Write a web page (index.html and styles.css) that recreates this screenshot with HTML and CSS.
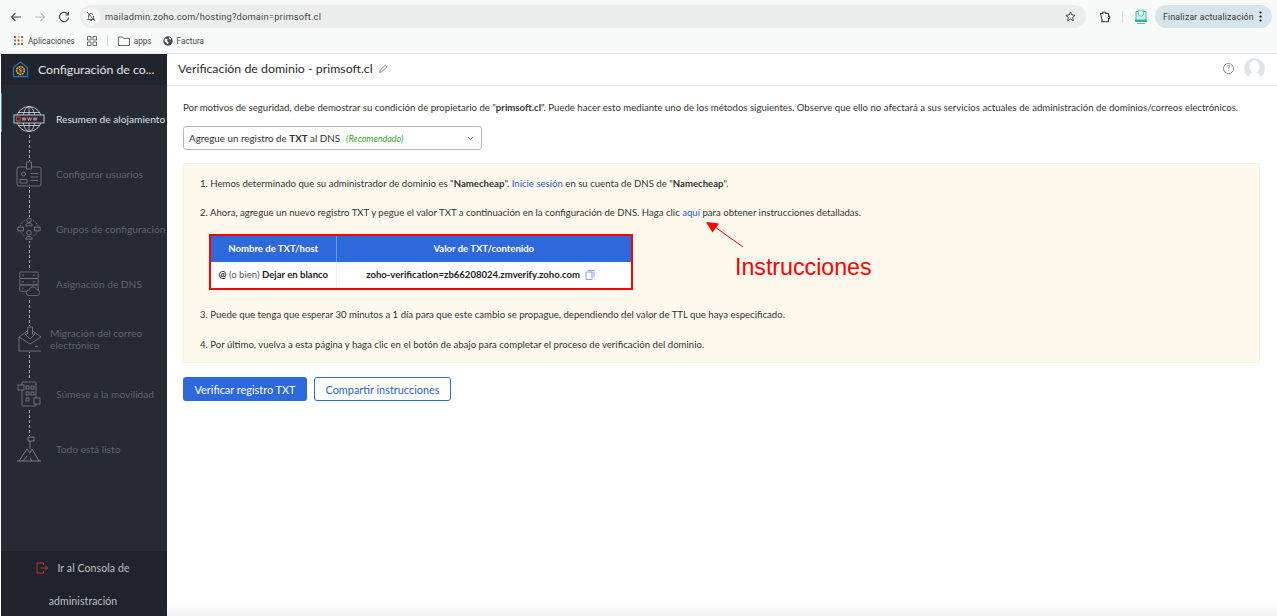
FILE: index.html
```html
<!DOCTYPE html>
<html lang="es">
<head>
	<meta charset="UTF-8">
	<title>Verificación de dominio</title>
	<link rel="stylesheet" href="styles.css">
</head>
<body>
	<div class="toolbar">
		<div class="nav-btns">
			<svg width="12" height="12" viewBox="0 0 12 12"><path d="M11 6H1.500M5.500 2 1.500 6l4 4" fill="none" stroke="#4a4d51" stroke-width="1.100"/></svg>
			<svg width="12" height="12" viewBox="0 0 12 12"><path d="M1 6h9.500M6.500 2l4 4-4 4" fill="none" stroke="#b4b7ba" stroke-width="1.100"/></svg>
			<svg width="12" height="12" viewBox="0 0 12 12"><path d="M10 3.600A4.600 4.600 0 1 0 10.600 6.500M10.400 1v3H7.400" fill="none" stroke="#4a4d51" stroke-width="1.200"/></svg>
		</div>
		<div class="address">
			<span class="site-icon">
				<svg width="10" height="11" viewBox="0 0 10 11"><path d="M2.500 7.500V5a2.500 2.500 0 0 1 4.600-1.300M7.500 5v2.500L8.500 8.500H1.500M4 9.500h2M1 1l8 9" fill="none" stroke="#45484c" stroke-width=".9"/></svg>
			</span>
			<span class="url">mailadmin.zoho.com/hosting?domain=primsoft.cl</span>
			<svg class="star" width="11" height="11" viewBox="0 0 12 12"><path d="M6 1l1.500 3.300 3.500.4-2.600 2.400.7 3.500L6 8.800 2.900 10.600l.7-3.500L1 4.700l3.500-.4z" fill="none" stroke="#3c3f43" stroke-width="1"/></svg>
		</div>
		<svg class="ext" width="12" height="12" viewBox="0 0 12 12"><path d="M1.500 2.500h2.300V1.200h3v1.300h2.700v2.700h1.200v2.400H9.500v3.200h-7l.7-1.800-.7-1.900z" fill="none" stroke="#3c3f43" stroke-width="1.100"/></svg>
		<span class="tool-sep"></span>
		<svg class="profile" width="12" height="16" viewBox="0 0 12 16">
			<path d="M1 2.500h10v9.500H1z" fill="#c9efe9" stroke="#45bfb0" stroke-width="1"/>
			<path d="M3.500 1h5v5L6 7.500 3.500 6z" fill="#eafaf7" stroke="#45bfb0" stroke-width=".8"/>
			<path d="M0 10.500h12V13H0z" fill="#2fb3a3"/>
			<path d="M2 14.500h8" stroke="#9aa3a6" stroke-width="1"/>
		</svg>
		<div class="update">
			<span>Finalizar actualización</span>
			<svg width="3" height="11" viewBox="0 0 3 11"><circle cx="1.500" cy="1.500" r="1.100"/><circle cx="1.500" cy="5.500" r="1.100"/><circle cx="1.500" cy="9.500" r="1.100"/></svg>
		</div>
	</div>
	<div class="bookmarks">
		<span class="bm">
			<svg width="9" height="9" viewBox="0 0 9 9">
				<rect width="2" height="2" fill="#d9453a"/><rect x="3.500" width="2" height="2" fill="#f0b429"/><rect x="7" width="2" height="2" fill="#3b82e0"/>
				<rect y="3.500" width="2" height="2" fill="#3ba55d"/><rect x="3.500" y="3.500" width="2" height="2" fill="#d9453a"/><rect x="7" y="3.500" width="2" height="2" fill="#f0b429"/>
				<rect y="7" width="2" height="2" fill="#3b82e0"/><rect x="3.500" y="7" width="2" height="2" fill="#3ba55d"/><rect x="7" y="7" width="2" height="2" fill="#d9453a"/>
			</svg>
			Aplicaciones
		</span>
		<svg class="grid-ico" width="10" height="10" viewBox="0 0 10 10"><path d="M.5.500h3.500v3.500H.5zM6 .5h3.500v3.500H6zM.5 6h3.500v3.500H.5zM6 6h3.500v3.500H6z" fill="none" stroke="#55585c" stroke-width=".9"/></svg>
		<span class="bm-sep"></span>
		<span class="bm bm-apps">
			<svg width="12" height="10" viewBox="0 0 12 10"><path d="M.5 1h4l1 1.300h6V9.500H.5z" fill="none" stroke="#55585c" stroke-width=".9"/></svg>
			apps
		</span>
		<span class="bm">
			<svg width="10" height="10" viewBox="0 0 10 10"><circle cx="5" cy="5" r="4.700" fill="#4b4e52"/><path d="M2 2.500l2.500.5L4 5l1.500 1L5 8.500 3 6.500 1.500 5zM6 1l2 1.500-.5 1.500L6 3z" fill="#f8f9f9"/></svg>
			Factura
		</span>
	</div>

	<div class="app">
		<aside class="sidebar">
			<div class="side-head">
				<svg width="17" height="17" viewBox="0 0 17 17"><path d="M8.500 1 1.500 6.500V15.500h14V6.500z" fill="none" stroke="#2f6fb5" stroke-width="1.300"/><circle cx="8.500" cy="9.500" r="3.800" fill="#20242c" stroke="#e8a92e" stroke-width="1.700" stroke-dasharray="2 .6"/><path d="M10 8H7.500v1.500h2V11H7" fill="none" stroke="#e8a92e" stroke-width=".9"/></svg>
				<span>Configuración de co...</span>
			</div>
			<nav class="steps">
				<div class="step-line"></div>
				<div class="step step-active">
					<span class="step-icon">
						<svg width="32" height="28" viewBox="0 0 32 28" fill="none" stroke="#d8dade" stroke-width=".8">
							<circle cx="16" cy="14" r="12.500"/><ellipse cx="16" cy="14" rx="6" ry="12.500"/><path d="M16 1.500v25M5 7.500h22M5 20.500h22"/>
							<rect x="1" y="10" width="30" height="8" fill="#252a33" stroke="#e6e7ea"/>
							<rect x="3.500" y="12" width="3.500" height="4" stroke="#d9534f"/>
							<path d="M9 12.500l1 3 1-3 1 3 1-3M14.500 12.500l1 3 1-3 1 3 1-3M20 12.500l1 3 1-3 1 3 1-3" stroke="#e9a6a0"/>
						</svg>
					</span>
					<span class="step-text">Resumen de alojamiento</span>
				</div>
				<div class="step">
					<span class="step-icon">
						<svg width="26" height="26" viewBox="0 0 26 26" fill="none" stroke="#7c8087" stroke-width=".8">
							<rect x="1" y="6" width="24" height="19" rx="2"/><rect x="10.500" y="1" width="5" height="7" fill="#252a33"/>
							<circle cx="7.500" cy="13" r="2"/><path d="M4 22v-3.500h7V22zM14.500 12.500H22M14.500 16H22M14.500 19.500H22"/>
						</svg>
					</span>
					<span class="step-text">Configurar usuarios</span>
				</div>
				<div class="step">
					<span class="step-icon">
						<svg width="24" height="24" viewBox="0 0 26 26" fill="none" stroke="#7c8087" stroke-width=".9">
							<circle cx="13" cy="3.500" r="2.500"/><path d="M9.500 9.500c0-4 7-4 7 0z"/><circle cx="13" cy="17" r="2.500"/><path d="M9.500 24c0-4 7-4 7 0z"/>
							<rect x="1" y="11" width="6" height="4"/><rect x="19" y="11" width="6" height="4"/>
							<path d="M3.500 10c.5-3 2.500-5 5-6.500M22.500 10c-.5-3-2.500-5-5-6.500M4 15.500c.5 2 2 3.500 4 5M22 15.500c-.5 2-2 3.500-4 5" stroke-dasharray="1.500 1"/>
						</svg>
					</span>
					<span class="step-text">Grupos de configuración</span>
				</div>
				<div class="step">
					<span class="step-icon">
						<svg width="24" height="28" viewBox="0 0 26 28" fill="none" stroke="#7c8087" stroke-width=".8">
							<rect x="3" y="1" width="20" height="7" rx="1"/><rect x="3" y="8" width="20" height="7" rx="1"/><rect x="3" y="15" width="20" height="7" rx="1"/>
							<path d="M5.500 4.500h2M5.500 11.500h2M5.500 18.500h2M17 4.500h3M17 11.500h3"/>
							<path d="M13 26.500a3 3 0 0 1 0-6 4.500 4.500 0 0 1 8.500-.5 3.300 3.300 0 0 1 .5 6.500z" fill="#252a33"/>
						</svg>
					</span>
					<span class="step-text">Asignación de DNS</span>
				</div>
				<div class="step step-tight">
					<span class="step-icon">
						<svg width="24" height="26" viewBox="0 0 24 26" fill="none" stroke="#7c8087" stroke-width=".8">
							<path d="M1 11 12 3l11 8M1 11v14h22M1 11l11 7 11-7"/><path d="M9.500 1v7H7l5 5 5-5h-2.500V1z" fill="#252a33"/><path d="M17 20.500h3"/>
						</svg>
					</span>
					<span class="step-text">Migración del correo electrónico</span>
				</div>
				<div class="step">
					<span class="step-icon">
						<svg width="24" height="28" viewBox="0 0 24 28" fill="none" stroke="#7c8087" stroke-width=".8">
							<rect x="5" y="2" width="14" height="24" rx="1"/><rect x="1" y="5" width="6" height="5" fill="#252a33"/><rect x="17" y="18" width="6" height="6" fill="#252a33"/>
							<rect x="9" y="6" width="3" height="3"/><rect x="14" y="6" width="3" height="3"/><rect x="9" y="12" width="3" height="3"/><rect x="14" y="12" width="3" height="3"/><rect x="9" y="18" width="3" height="3"/>
						</svg>
					</span>
					<span class="step-text">Súmese a la movilidad</span>
				</div>
				<div class="step">
					<span class="step-icon">
						<svg width="26" height="26" viewBox="0 0 26 26" fill="none" stroke="#8a8e95" stroke-width=".8">
							<path d="M1 25h24M3 25l8-12 3 4 2-4 7 12M7 25l4-5M16 25l-2-3"/><path d="M14 13V2"/><path d="M12 1h6v4h-6z" fill="#252a33"/>
						</svg>
					</span>
					<span class="step-text">Todo está listo</span>
				</div>
			</nav>
			<div class="side-foot">
				<div class="foot-line">
					<svg width="12" height="12" viewBox="0 0 12 12" fill="none" stroke="#cf2a2a" stroke-width="1"><path d="M7.500 3V1H1v10h6.500V9M4.500 6H11.500M9.500 4l2 2-2 2"/></svg>
					<span>Ir al Consola de</span>
				</div>
				<div class="foot-line">administración</div>
			</div>
		</aside>

		<main class="main">
			<header class="main-head">
				<h1>Verificación de dominio - primsoft.cl</h1>
				<svg class="pencil" width="9" height="9" viewBox="0 0 9 9"><path d="M.7 8.300l.4-2L6.300 1l1.700 1.700-5.300 5.200z" fill="none" stroke="#666" stroke-width=".8"/></svg>
				<span class="help">?</span>
				<svg class="avatar" width="21" height="21" viewBox="0 0 21 21"><circle cx="10.500" cy="10.500" r="10.500" fill="#dfe3ec"/><ellipse cx="10.500" cy="9" rx="5" ry="6.500" fill="#fff"/><path d="M4 21c.5-5 3-6.500 6.500-6.500S16.500 16 17 21z" fill="#fff"/></svg>
			</header>
			<div class="content">
				<p class="intro">Por motivos de seguridad, debe demostrar su condición de propietario de "<b>primsoft.cl</b>". Puede hacer esto mediante uno de los métodos siguientes. Observe que ello no afectará a sus servicios actuales de administración de dominios/correos electrónicos.</p>
				<div class="method">
					<span>Agregue un registro de <b>TXT</b> al DNS</span>
					<em>(Recomendado)</em>
					<svg width="7" height="5" viewBox="0 0 7 5"><path d="M1 1l2.500 2.500L6 1" fill="none" stroke="#555" stroke-width=".9"/></svg>
				</div>
				<div class="steps-box">
					<p>1. Hemos determinado que su administrador de dominio es "<b>Namecheap</b>". <a>Inicie sesión</a> en su cuenta de DNS de "<b>Namecheap</b>".</p>
					<p>2. Ahora, agregue un nuevo registro TXT y pegue el valor TXT a continuación en la configuración de DNS. Haga clic <a>aquí</a> para obtener instrucciones detalladas.</p>
					<div class="txt-frame">
						<table class="txt-table">
							<tr>
								<th class="col-host">Nombre de TXT/host</th>
								<th>Valor de TXT/contenido</th>
							</tr>
							<tr>
								<td class="cell-host"><b>@</b> <span class="or">(o bien)</span> <b>Dejar en blanco</b></td>
								<td class="cell-value">
									<b>zoho-verification=zb66208024.zmverify.zoho.com</b>
									<svg width="10" height="11" viewBox="0 0 10 11"><path d="M3 1.500h6V8M1 3h6v7.500H1z" fill="none" stroke="#6f9ae6" stroke-width=".9"/></svg>
								</td>
							</tr>
						</table>
					</div>
					<p>3. Puede que tenga que esperar 30 minutos a 1 día para que este cambio se propague, dependiendo del valor de TTL que haya especificado.</p>
					<p>4. Por último, vuelva a esta página y haga clic en el botón de abajo para completar el proceso de verificación del dominio.</p>
					<svg class="note-arrow" width="44" height="32" viewBox="0 0 44 32"><path d="M38 26 10 6" stroke="#f00" stroke-width="1"/><path d="M1 1l13 1.500-6.500 9z" fill="#f00"/></svg>
					<span class="note-text">Instrucciones</span>
				</div>
				<div class="actions">
					<button class="btn btn-primary">Verificar registro TXT</button>
					<button class="btn btn-outline">Compartir instrucciones</button>
				</div>
			</div>
		</main>
	</div>
</body>
</html>
```

FILE: styles.css
```css
*{
	margin: 0;
	padding: 0;
	box-sizing: border-box;
}
html, body{
	height: 616px;
	overflow: hidden;
}
body{
	font-family: Lato, "Open Sans", sans-serif;
	background: #fff;
	color: #222;
}

/* browser chrome */
.toolbar{
	height: 30px;
	padding: 3px 5px 0 10px;
	background: #f8f9f9;
	display: flex;
	align-items: center;
	font-family: Roboto, sans-serif;
}
.nav-btns{
	display: flex;
	gap: 12px;
	width: 70px;
}
.address{
	width: 1007px;
	height: 23px;
	background: #ebeded;
	border-radius: 12px;
	display: flex;
	align-items: center;
	padding: 0 10px 0 3px;
}
.site-icon{
	width: 17px;
	height: 17px;
	border-radius: 50%;
	background: #fafafa;
	display: flex;
	align-items: center;
	justify-content: center;
}
.url{
	margin-left: 5px;
	font-size: 9.300px;
	letter-spacing: .2px;
	color: #43464a;
}
.star{
	margin-left: auto;
}
.ext{
	margin-left: 13px;
}
.tool-sep{
	width: 1px;
	height: 12px;
	background: #d5dcdf;
	margin: 0 12px 0 11px;
}
.profile{
	margin-right: 8px;
}
.update{
	width: 117px;
	height: 23px;
	border-radius: 12px;
	background: #d5e5e9;
	display: flex;
	align-items: center;
	justify-content: space-between;
	padding: 0 10px 0 8px;
	font-size: 8.700px;
	letter-spacing: .2px;
	color: #33383c;
}
.bookmarks{
	height: 24px;
	padding: 0 0 2px 14px;
	background: #f8f9f9;
	border-bottom: 1px solid #e3e4e5;
	display: flex;
	align-items: center;
	font-family: Roboto, sans-serif;
	font-size: 8.200px;
	color: #44474b;
}
.bm{
	display: flex;
	align-items: center;
	gap: 4px;
}
.bm:first-child{
	gap: 5px;
}
.grid-ico{
	margin-left: 12px;
}
.bm-sep{
	width: 1px;
	height: 11px;
	background: #d3dde3;
	margin: 0 10px 0 10px;
}
.bm-apps{
	margin-right: 11px;
}

/* app */
.app{
	display: flex;
	height: 562px;
}
.sidebar{
	width: 166px;
	margin-left: 1px;
	background: #252a33;
	display: flex;
	flex-direction: column;
	flex-shrink: 0;
	border-bottom-left-radius: 3px;
}
.side-head{
	height: 31px;
	background: #20242c;
	display: flex;
	align-items: center;
	padding-left: 11px;
	gap: 9px;
	font-size: 12.300px;
	color: #e4e5e7;
}
.steps{
	position: relative;
	flex: 1;
	padding-top: 6px;
}
.step-line{
	position: absolute;
	left: 28px;
	top: 30px;
	height: 328px;
	border-left: 1px dashed #a5a8ad;
}
.step{
	height: 55px;
	display: flex;
	align-items: center;
	font-size: 10.200px;
	color: #5f636b;
	position: relative;
}
.step-icon{
	width: 55px;
	flex-shrink: 0;
	display: flex;
	justify-content: center;
}
.step-icon svg{
	background: #252a33;
}
.step-text{
	white-space: nowrap;
}
.step-active{
	color: #dfe1e4;
}
.step-active::before{
	content: "";
	position: absolute;
	left: 0;
	top: 2px;
	width: 1px;
	height: 39px;
	background: #4d8ae8;
}
.step-tight .step-icon{
	width: 49px;
	justify-content: flex-start;
	padding-left: 17px;
}
.step-tight .step-text{
	white-space: normal;
	width: 110px;
	line-height: 12px;
}
.side-foot{
	height: 65px;
	padding-right: 2px;
	background: #1f232b;
	font-size: 10.500px;
	color: #bfc1c5;
	letter-spacing: .1px;
	text-align: center;
}
.foot-line{
	height: 33px;
	display: flex;
	align-items: center;
	justify-content: center;
	gap: 9px;
}

/* main */
.main{
	flex: 1;
	min-width: 0;
	display: flex;
	flex-direction: column;
	background: linear-gradient(to top, #f0f0f0, #fff 14px);
}
.main-head{
	height: 32px;
	border-bottom: 1px solid #e6e6e6;
	display: flex;
	align-items: center;
	padding: 0 12px 2px 11px;
}
.main-head h1{
	font-size: 12.350px;
	font-weight: 400;
	color: #2a2a2a;
}
.pencil{
	margin-left: 6px;
}
.help{
	margin-left: auto;
	width: 11px;
	height: 11px;
	border: 1px solid #8b8b8b;
	border-radius: 50%;
	font-size: 8px;
	line-height: 9px;
	text-align: center;
	color: #777;
}
.avatar{
	margin-left: 10px;
}
.content{
	padding: 16px 17px 0 16px;
}
.intro{
	font-size: 9.610px;
	line-height: 12px;
	white-space: nowrap;
	color: #333;
}
.method{
	width: 299px;
	height: 24px;
	margin-top: 12px;
	border: 1px solid #b4b4b4;
	border-radius: 3px;
	display: flex;
	align-items: center;
	padding: 0 7px 0 5px;
	font-size: 9.800px;
	color: #333;
}
.method em{
	margin-left: 6px;
	color: #3fa535;
	font-size: 9px;
}
.method svg{
	margin-left: auto;
}
.steps-box{
	position: relative;
	height: 200px;
	margin-top: 13px;
	padding: 13.600px 0 0 16px;
	background: #fef8ed;
	border: 1px solid #fbf0df;
	font-size: 9.610px;
	line-height: 12px;
	color: #333;
}
.steps-box p{
	margin-bottom: 17.500px;
	white-space: nowrap;
}
.steps-box a{
	color: #2b5fc4;
}
.txt-frame{
	width: 424px;
	height: 56px;
	margin: -2.600px 0 19px 9px;
	border: 2px solid #f00;
}
.txt-table{
	width: 100%;
	height: 100%;
	border-collapse: collapse;
	background: #fff;
	font-size: 9.550px;
}
.txt-table th{
	height: 26px;
	background: #2d69dd;
	color: #fff;
	font-weight: 700;
	border-left: 1px solid #6d96e6;
}
.txt-table th.col-host{
	width: 125px;
	border-left: 0;
}
.txt-table td{
	text-align: center;
	white-space: nowrap;
}
.txt-table b{
	color: #222;
}
.cell-value{
	padding-right: 6px;
	border-left: 1px solid #f0f0f0;
}
.cell-value svg{
	margin-left: 3px;
	vertical-align: -2px;
}
.or{
	color: #555;
}
.note-arrow{
	position: absolute;
	left: 521px;
	top: 57px;
}
.note-text{
	position: absolute;
	left: 551px;
	top: 90px;
	font-family: "Liberation Sans", Arial, sans-serif;
	font-size: 23.200px;
	line-height: 26px;
	color: #f00;
}
.actions{
	display: flex;
	gap: 7px;
	margin-top: 14px;
}
.btn{
	height: 24px;
	border-radius: 3px;
	font-family: Lato, sans-serif;
	font-size: 10.900px;
}
.btn-primary{
	width: 124px;
	background: #2d69dd;
	border: 0;
	color: #fff;
}
.btn-outline{
	width: 137px;
	background: #fff;
	border: 1px solid #2d69dd;
	color: #2d5fc0;
}
```
